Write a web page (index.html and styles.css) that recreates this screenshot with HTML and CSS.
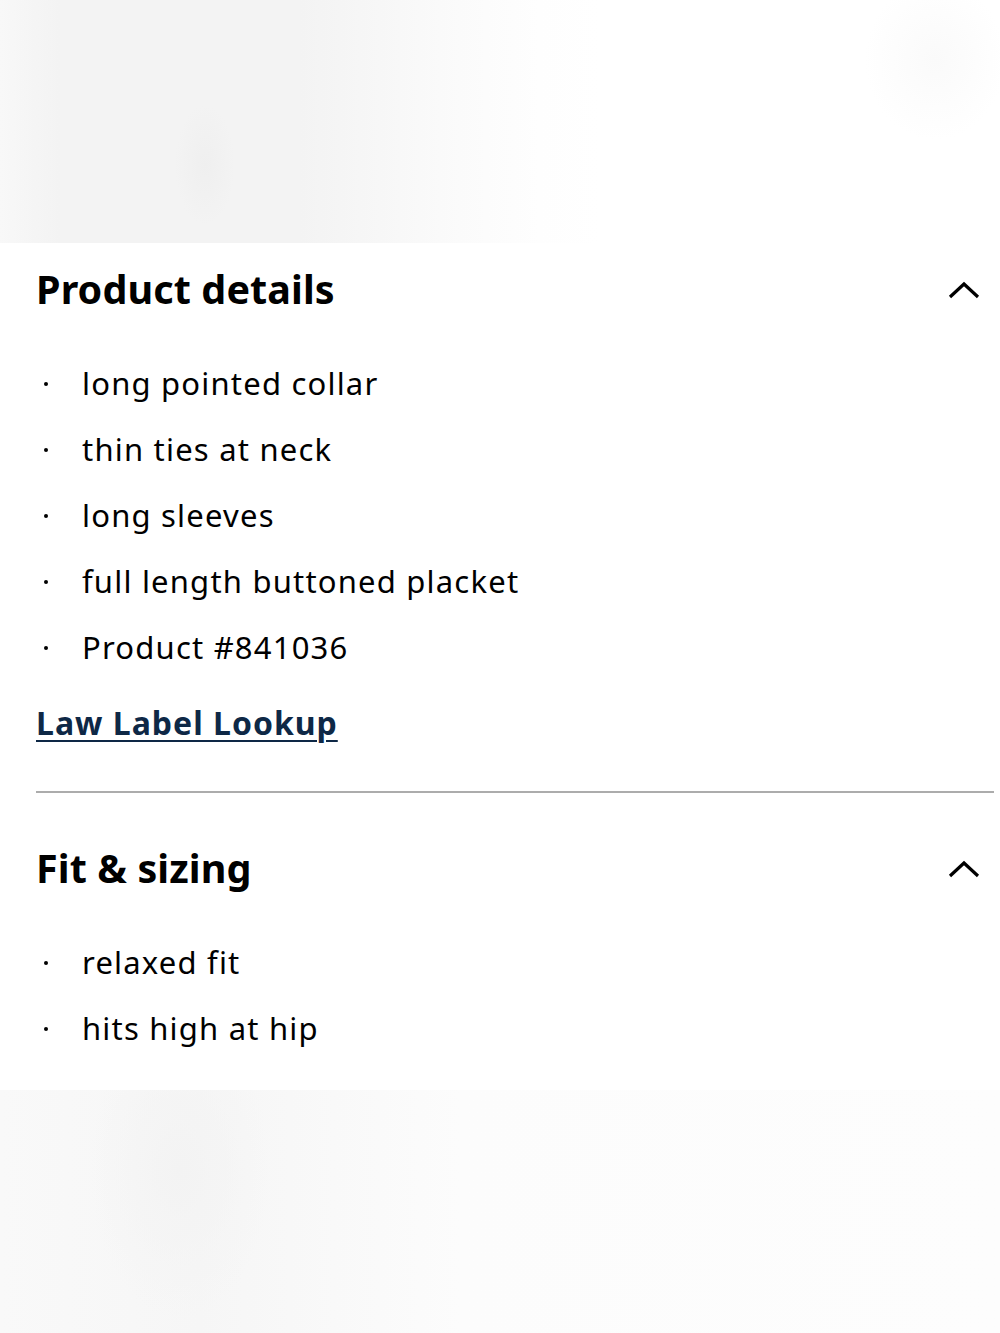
FILE: index.html
```html
<!DOCTYPE html>
<html lang="en">
<head>
<meta charset="utf-8">
<title>Product details</title>
<link rel="stylesheet" href="styles.css">
</head>
<body>
<div class="hero"></div>
<main class="content">
  <section class="panel">
    <div class="panel-head">
      <h2 class="panel-title">Product details</h2>
      <svg class="chevron" viewBox="0 0 32 18" width="32" height="18" aria-hidden="true"><path d="M2 16 L16 3 L30 16" fill="none" stroke="#000" stroke-width="3.2"/></svg>
    </div>
    <ul class="bullets">
      <li>long pointed collar</li>
      <li>thin ties at neck</li>
      <li>long sleeves</li>
      <li>full length buttoned placket</li>
      <li>Product #841036</li>
    </ul>
    <a class="law-link" href="#">Law Label Lookup</a>
  </section>
  <hr class="divider">
  <section class="panel panel-fit">
    <div class="panel-head">
      <h2 class="panel-title">Fit &amp; sizing</h2>
      <svg class="chevron" viewBox="0 0 32 18" width="32" height="18" aria-hidden="true"><path d="M2 16 L16 3 L30 16" fill="none" stroke="#000" stroke-width="3.2"/></svg>
    </div>
    <ul class="bullets">
      <li>relaxed fit</li>
      <li>hits high at hip</li>
    </ul>
  </section>
</main>
<div class="footer-band"></div>
</body>
</html>
```
FILE: styles.css
```css
html, body {
  margin: 0;
  padding: 0;
  background: #fff;
}
body {
  font-family: "Noto Sans", "Open Sans", sans-serif;
  color: #000;
  width: 1000px;
}
.hero {
  height: 243px;
  background:
    radial-gradient(ellipse 30px 60px at 205px 165px, #efefef 0%, rgba(240,240,240,0) 100%),
    radial-gradient(ellipse 70px 80px at 935px 60px, #fafafa 0%, rgba(250,250,250,0) 100%),
    linear-gradient(90deg, #f8f8f8 0px, #f3f3f3 60px, #f3f3f3 300px, #f7f7f7 380px, #fbfbfb 460px, #fefefe 540px, #fff 600px);
}
.content {
  padding: 0 6px 29px 36px;
}
.panel-head {
  height: 92px;
  display: flex;
  align-items: center;
  justify-content: space-between;
  padding-right: 14px;
}
.panel-fit .panel-head {
  margin-top: 29px;
}
.panel-title {
  margin: 0;
  font-family: "Noto Sans", sans-serif;
  font-weight: 700;
  font-size: 39.5px;
  letter-spacing: 0.1px;
}
.chevron {
  display: block;
  margin-top: 2px;
}
.bullets {
  list-style: none;
  margin: 15px 0 0;
  padding: 0;
}
.bullets li {
  position: relative;
  height: 66px;
  line-height: 66px;
  padding-left: 46px;
  font-size: 31px;
  letter-spacing: 1.2px;
  font-weight: 400;
}
.bullets li::before {
  content: "";
  position: absolute;
  left: 8px;
  top: 32px;
  width: 4px;
  height: 4px;
  border-radius: 50%;
  background: #000;
}
.law-link {
  display: inline-block;
  margin-top: 19px;
  line-height: 48px;
  font-size: 32px;
  letter-spacing: 1px;
  font-weight: 700;
  color: #0e2846;
  text-decoration: underline;
  text-decoration-thickness: 2px;
  text-underline-offset: 5px;
}
.divider {
  border: 0;
  height: 2px;
  background: #acacac;
  margin: 44px 0 0;
}
.footer-band {
  height: 243px;
  background:
    radial-gradient(ellipse 90px 150px at 180px 80px, #f3f3f3 0%, rgba(245,245,245,0) 100%),
    linear-gradient(90deg, #f9f9f9 0px, #f6f6f6 200px, #fafafa 380px, #fcfcfc 460px, #fdfdfd 1000px);
}
```
